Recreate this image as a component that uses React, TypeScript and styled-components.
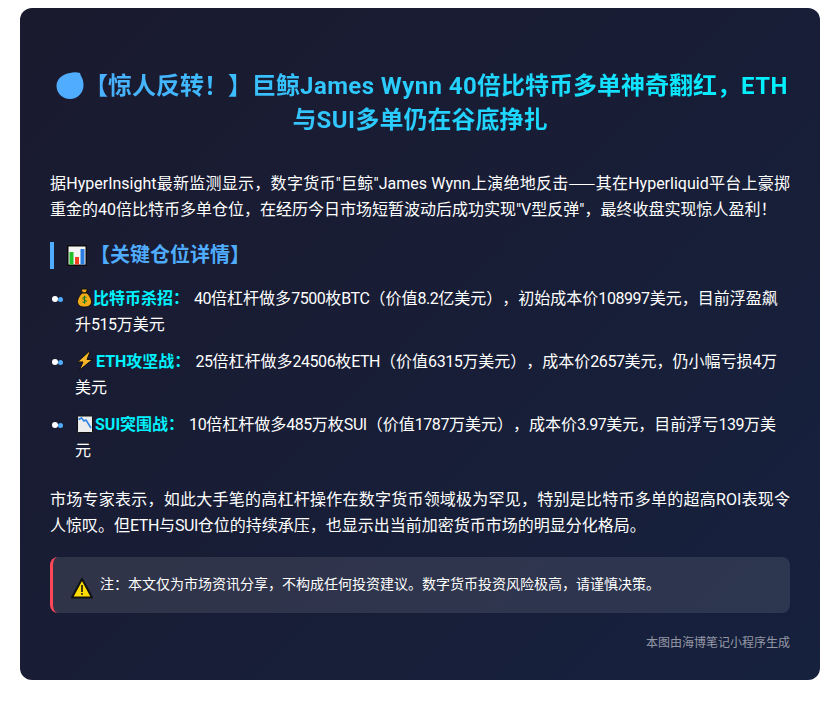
import React from "react";
import styled, { createGlobalStyle } from "styled-components";

const Global = createGlobalStyle`
  html, body { margin: 0; padding: 0; background: #fff; }
  body {
    font-family: Roboto, "Noto Sans CJK SC", sans-serif;
    text-spacing-trim: space-all;
  }
`;

const Card = styled.main`
  box-sizing: border-box;
  width: 800px;
  height: 672px;
  margin: 8px 0 32px 20px;
  padding: 30px;
  border-radius: 12px;
  background: linear-gradient(135deg, #1a1a2e 0%, #16213e 100%);
  color: #fff;
`;

const Title = styled.h1`
  margin: 31px 0 32px;
  font-size: 24px;
  line-height: 34px;
  font-weight: 700;
  text-align: center;
  background: linear-gradient(90deg, #4facfe 0%, #00f2fe 100%);
  -webkit-background-clip: text;
  background-clip: text;
  color: transparent;
`;

const Latin = styled.span`
  letter-spacing: 0.4px;
`;

const Tight = styled.span`
  letter-spacing: -0.45px;
`;

const Blob = styled.svg`
  width: 28px;
  height: 28px;
  margin-left: 4px;
  vertical-align: -6px;
`;

const Para = styled.p<{ $gap: number }>`
  margin: 0 0 ${(p) => p.$gap}px;
  font-size: 16px;
  line-height: 26px;
  text-align: justify;
`;

const Dash = styled.span`
  font-family: "Noto Sans CJK SC", sans-serif;
`;

const Heading = styled.h2`
  display: flex;
  align-items: center;
  gap: 3px;
  height: 27px;
  margin: 0 0 17px;
  padding-left: 13px;
  border-left: 4px solid #4facfe;
  font-size: 20px;
  line-height: 27px;
  font-weight: 700;
  color: #4facfe;
`;

const HeadingIcon = styled.svg`
  width: 20px;
  height: 21px;
  flex: none;
`;

const Items = styled.ul`
  list-style: none;
  margin: 0 0 23px;
  padding: 0;
`;

const Item = styled.li`
  position: relative;
  margin: 0 0 11px;
  padding-left: 25px;
  font-size: 16px;
  line-height: 26px;

  &::before {
    content: "";
    position: absolute;
    left: 2px;
    top: 10px;
    width: 6px;
    height: 6px;
    border-radius: 50%;
    background: #fff;
  }
  &::after {
    content: "";
    position: absolute;
    left: 8px;
    top: 11px;
    width: 5px;
    height: 5px;
    border-radius: 50%;
    background: #4facfe;
  }
`;

const Lead = styled.strong`
  font-weight: 700;
  color: #00f2fe;
  margin-right: 5px;
`;

const Emoji = styled.svg<{ $after: number }>`
  width: 18px;
  height: 20px;
  vertical-align: -4px;
  margin-right: ${(p) => p.$after}px;
`;

const Note = styled.aside`
  display: flex;
  align-items: center;
  gap: 7px;
  box-sizing: border-box;
  height: 56px;
  margin-top: 18px;
  padding: 0 0 0 18px;
  border-left: 3px solid #ff4757;
  border-radius: 8px;
  background: rgba(255, 255, 255, 0.1);
  font-size: 14px;
  line-height: 20px;
`;

const NoteText = styled.span`
  position: relative;
  top: -1px;
`;

const Warn = styled.svg`
  width: 22px;
  height: 22px;
  flex: none;
  position: relative;
  top: 3px;
`;

const Footer = styled.footer`
  margin-top: 21px;
  text-align: right;
  font-size: 12px;
  line-height: 18px;
  color: rgba(255, 255, 255, 0.55);
`;

const Chart = () => (
  <HeadingIcon viewBox="0 0 20 21">
    <rect width="20" height="21" fill="#0b0b0b" />
    <rect x="1.500" y="1.500" width="17" height="18" fill="#f4f4f4" />
    <rect x="2.500" y="7" width="4" height="12.500" fill="#1fbf2c" />
    <rect x="8" y="12" width="4" height="7.500" fill="#f0401f" />
    <rect x="13.500" y="4" width="4" height="15.500" fill="#2a7de1" />
  </HeadingIcon>
);

const Bag = () => (
  <Emoji $after={0} viewBox="0 0 18 20">
    <path d="M6 1h6.500L11 5H7.500z" fill="#f0a818" stroke="#111" />
    <path d="M7 5h5c2.500 2.500 4.500 5.500 4.500 8.500 0 3.500-2.500 5.500-7 5.500s-7-2-7-5.500c0-3 2-6 4.500-8.500z" fill="#f4ac16" stroke="#111" />
    <path d="M11.500 9.500c-1-.8-3.500-.8-3.800.7-.3 1.800 3.800 1.200 3.600 3-.2 1.500-3 1.500-4 .5M9.500 7.800v8" fill="none" stroke="#127a2c" />
  </Emoji>
);

const Bolt = () => (
  <Emoji $after={3} viewBox="0 0 18 20">
    <path d="M13.500 1 2.500 11h5.500L4.500 19 17.500 8.500H12L15 1z" fill="#f7b52a" stroke="#111" strokeLinejoin="round" />
  </Emoji>
);

const Down = () => (
  <Emoji $after={2} viewBox="0 0 18 20">
    <rect x="2.500" y="2" width="15" height="16.500" rx="1" fill="#ececec" stroke="#111" />
    <path d="M3.500 5.500l3-1.500 2.500 3 2-1 5 8" fill="none" stroke="#2a82e4" strokeWidth="1.500" />
  </Emoji>
);

export default function App() {
  return (
    <>
      <Global />
      <Card>
        <Title>
          <Blob viewBox="0 0 28 28">
            <path d="M14 1c3-1 7-1 10 0 .5 1 .5 2 1 3 2 3 2.500 6 2.500 9.500C27.500 21 21.500 27 14 27S.500 21 .500 14 6.500 2 14 1z" fill="#4facfe" />
          </Blob>
          【惊人反转！】巨鲸<Latin>James Wynn 40</Latin>倍比特币多单神奇翻红，<Latin>ETH</Latin>与<Latin>SUI</Latin>多单仍在谷底挣扎
        </Title>
        <Para $gap={19}>
          据HyperInsight最新监测显示，数字货币"巨鲸"James Wynn上演绝地反击<Dash>——</Dash>其在Hyperliquid平台上豪掷重金的40倍比特币多单仓位，在经历今日市场短暂波动后成功实现"V型反弹"，最终收盘实现惊人盈利！
        </Para>
        <Heading>
          <Chart />
          <span>【关键仓位详情】</span>
        </Heading>
        <Items>
          <Item>
            <Bag />
            <Lead>比特币杀招：</Lead><Tight>40</Tight>倍杠杆做多<Tight>7500</Tight>枚<Tight>BTC</Tight>（价值<Tight>8.2</Tight>亿美元），初始成本价<Tight>108997</Tight>美元，目前浮盈飙升<Tight>515</Tight>万美元
          </Item>
          <Item>
            <Bolt />
            <Lead>ETH攻坚战：</Lead><Tight>25</Tight>倍杠杆做多<Tight>24506</Tight>枚<Tight>ETH</Tight>（价值<Tight>6315</Tight>万美元），成本价<Tight>2657</Tight>美元，仍小幅亏损<Tight>4</Tight>万美元
          </Item>
          <Item>
            <Down />
            <Lead>SUI突围战：</Lead><Tight>10</Tight>倍杠杆做多<Tight>485</Tight>万枚<Tight>SUI</Tight>（价值<Tight>1787</Tight>万美元），成本价<Tight>3.97</Tight>美元，目前浮亏<Tight>139</Tight>万美元
          </Item>
        </Items>
        <Para $gap={0}>
          市场专家表示，如此大手笔的高杠杆操作在数字货币领域极为罕见，特别是比特币多单的超高ROI表现令人惊叹。但<Tight>ETH</Tight>与<Tight>SUI</Tight>仓位的持续承压，也显示出当前加密货币市场的明显分化格局。
        </Para>
        <Note>
          <Warn viewBox="0 0 22 22">
            <path d="M11 2 21 20.500H1z" fill="#ffdc00" stroke="#111" strokeWidth="2" strokeLinejoin="round" />
            <rect x="10.200" y="8" width="1.600" height="7" fill="#111" />
            <rect x="10.200" y="16" width="1.600" height="1.800" fill="#111" />
          </Warn>
          <NoteText>注：本文仅为市场资讯分享，不构成任何投资建议。数字货币投资风险极高，请谨慎决策。</NoteText>
        </Note>
        <Footer>本图由海博笔记小程序生成</Footer>
      </Card>
    </>
  );
}
